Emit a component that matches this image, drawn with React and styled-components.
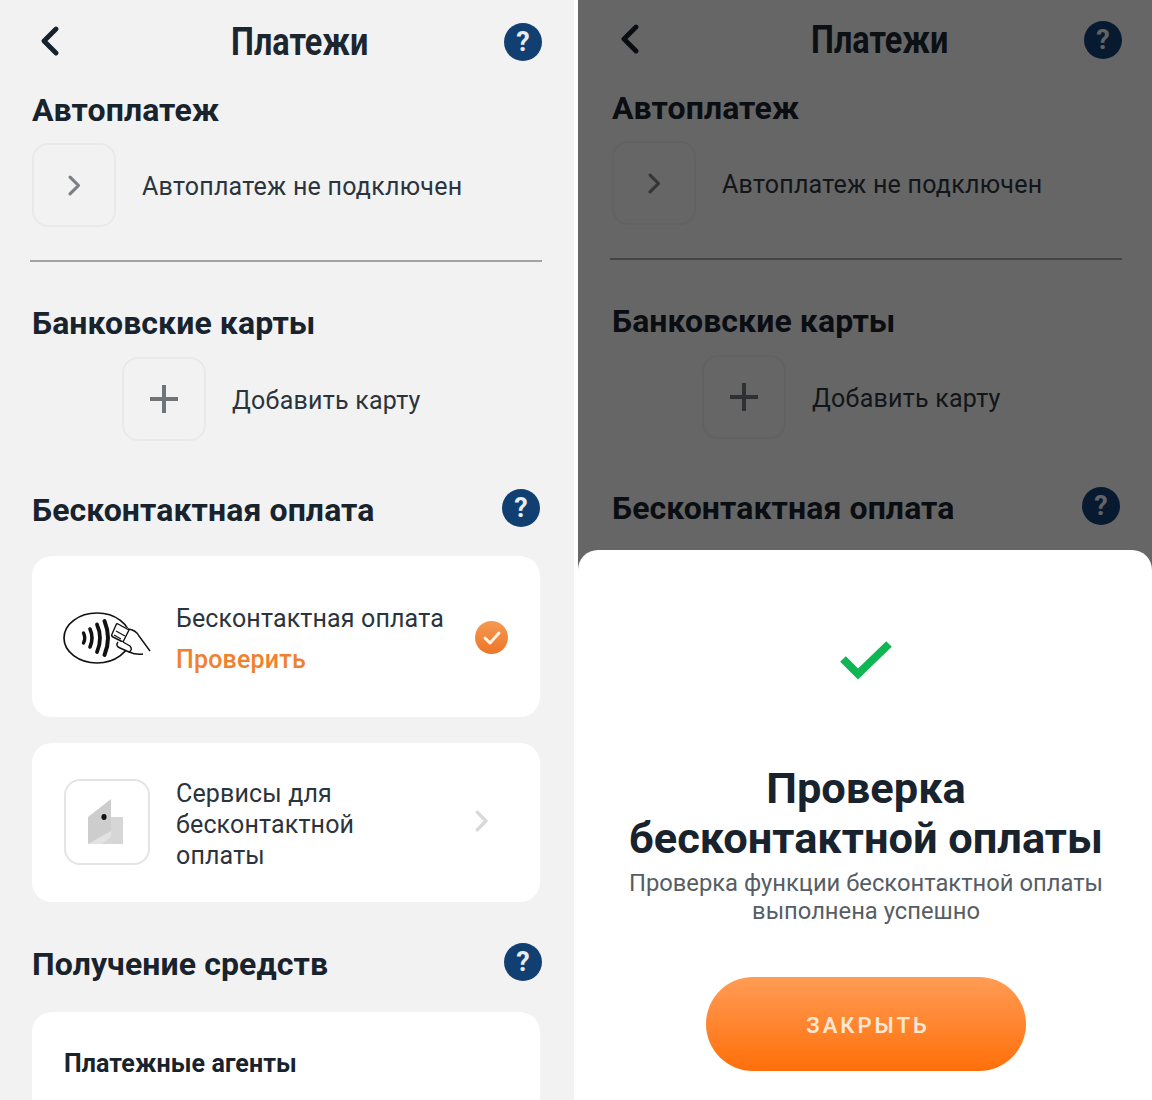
import React from "react"
import styled, { createGlobalStyle } from "styled-components"

const GlobalStyle = createGlobalStyle`
    html, body {
        margin: 0;
        padding: 0;
        background: #fff;
    }
    * {
        box-sizing: border-box;
    }
`

function Chevron({ size = 24, color = "#7c7f83", width = 3 }) {
    return (
        <svg width={size * 0.6} height={size} viewBox="0 0 12 20" fill="none">
            <path d="M2 2 L10 10 L2 18" stroke={color} strokeWidth={width} strokeLinecap="round" strokeLinejoin="round" />
        </svg>
    )
}

function BackArrow() {
    return (
        <svg width="20" height="30" viewBox="0 0 20 30" fill="none">
            <path d="M16 3 L4 15 L16 27" stroke="#16212c" strokeWidth="4.8" strokeLinecap="round" strokeLinejoin="round" />
        </svg>
    )
}

function ContactlessLogo() {
    return (
        <svg width="88" height="54" viewBox="0 0 88 54" fill="none" stroke="#111">
            <ellipse cx="34" cy="27" rx="33" ry="25" strokeWidth="1.7" />
            <path d="M20.5 22 Q23 27 20.5 32" strokeWidth="3.4" strokeLinecap="round" />
            <path d="M27 18 Q31 27 27 36" strokeWidth="3.6" strokeLinecap="round" />
            <path d="M34 13.5 Q40 27 34 41" strokeWidth="3.8" strokeLinecap="round" />
            <path d="M41.5 10 Q48.5 27 41.5 44" strokeWidth="4" strokeLinecap="round" />
            <g fill="#fff" strokeWidth="1.4" strokeLinejoin="round">
                <path d="M52 14 Q67 15 72 24 Q80 34 87 41 L80 42 Q73 44 66 40 L50 34 Z" stroke="none" />
                <path d="M55 13 L66 19 L60 31 L50 26 Q48 25 49 23 L53 14 Q54 12 55 13 Z" />
                <path d="M65 18 Q73 19 76 25 L87 40" fill="none" />
                <path d="M53 20 L62 25 M51 24 L58 28" fill="none" strokeWidth="1.1" />
                <path d="M60 31 L67 35 Q70 39 66 41 L57 37 Q52 35 55 31" />
                <path d="M66 41 Q73 44 80 43" fill="none" />
            </g>
        </svg>
    )
}

function CardGlyph() {
    return (
        <svg width="35" height="45" viewBox="0 0 35 45">
            <path d="M23 18 L35 18 L35 45 L0 45 Z" fill="#d6d6d6" />
            <path d="M0 18 L23 0 L23 32 L0 45 Z" fill="#cdcdcd" />
            <path d="M0 45 L23 32 L23 38 L14 45 Z" fill="#e2e2e2" />
            <ellipse cx="16" cy="18" rx="2.6" ry="3" fill="#111" />
        </svg>
    )
}

function SmallCheck() {
    return (
        <svg width="20" height="16" viewBox="0 0 20 16" fill="none">
            <path d="M3 8 L8 13 L17 3" stroke="#fff3e6" strokeWidth="3" strokeLinecap="round" strokeLinejoin="round" />
        </svg>
    )
}

function BigCheck() {
    return (
        <svg width="54" height="42" viewBox="0 0 54 42" fill="none">
            <path d="M4 20 L19 35 L50 5" stroke="#10b653" strokeWidth="8" strokeLinejoin="miter" />
        </svg>
    )
}

function ScreenContent({ dimmed }) {
    return (
        <Content $dimmed={dimmed}>
            <Header>
                <BackButton><BackArrow /></BackButton>
                <PageTitle>Платежи</PageTitle>
                <HelpBadge $top={0}>?</HelpBadge>
            </Header>

            <Heading $top={8}>Автоплатеж</Heading>
            <ActionRow $top={15}>
                <Tile><Chevron size={21} /></Tile>
                <ActionText>Автоплатеж не подключен</ActionText>
            </ActionRow>
            <Divider />

            <Heading $top={43}>Банковские карты</Heading>
            <ActionRow $top={16} $indent={90}>
                <Tile><PlusIcon /></Tile>
                <ActionText>Добавить карту</ActionText>
            </ActionRow>

            <HeadingRow $top={51}>
                <Heading>Бесконтактная оплата</Heading>
                <HelpBadge $shift={2}>?</HelpBadge>
            </HeadingRow>

            {!dimmed && (
                <>
                    <Card $top={28} $height={161}>
                        <LogoSlot><ContactlessLogo /></LogoSlot>
                        <CardBody>
                            <CardText>Бесконтактная оплата</CardText>
                            <CheckLink>Проверить</CheckLink>
                        </CardBody>
                        <StatusDot><SmallCheck /></StatusDot>
                    </Card>

                    <Card $top={26} $height={159}>
                        <GlyphTile><CardGlyph /></GlyphTile>
                        <CardBody>
                            <CardText>Сервисы для<br />бесконтактной<br />оплаты</CardText>
                        </CardBody>
                        <CardArrow><Chevron size={22} color="#d8d8d8" /></CardArrow>
                    </Card>

                    <HeadingRow $top={44}>
                        <Heading>Получение средств</Heading>
                        <HelpBadge>?</HelpBadge>
                    </HeadingRow>

                    <AgentsCard>
                        <AgentsTitle>Платежные агенты</AgentsTitle>
                    </AgentsCard>
                </>
            )}
        </Content>
    )
}

function App() {
    return (
        <>
            <GlobalStyle />
            <Page>
                <Screen>
                    <ScreenContent />
                </Screen>
                <Screen>
                    <ScreenContent dimmed />
                    <Overlay />
                    <Sheet>
                        <BigCheck />
                        <SheetTitle>Проверка<br />бесконтактной оплаты</SheetTitle>
                        <SheetText>Проверка функции бесконтактной оплаты<br />выполнена успешно</SheetText>
                        <CloseButton>ЗАКРЫТЬ</CloseButton>
                    </Sheet>
                </Screen>
            </Page>
        </>
    )
}

export default App;

const PlusIcon = styled.span`
    width: 28px;
    height: 28px;
    background:
        linear-gradient(#6f7479, #6f7479) center / 28px 4px no-repeat,
        linear-gradient(#6f7479, #6f7479) center / 4px 28px no-repeat;
`

const Page = styled.div`
    display: flex;
    gap: 4px;
    width: 1152px;
    height: 1100px;
    overflow: hidden;
    background: #fff;
    font-family: Roboto, "Liberation Sans", sans-serif;
`

const Screen = styled.div`
    position: relative;
    flex: 0 0 574px;
    height: 1100px;
    overflow: hidden;
    background: #f2f2f2;
`

const Content = styled.div`
    display: flex;
    flex-direction: column;
    width: 574px;
    padding: 0 32px;
    margin-top: ${p => (p.$dimmed ? "-2px" : "0")};
    margin-left: ${p => (p.$dimmed ? "2px" : "0")};
    color: #16212c;
`

const Header = styled.div`
    display: flex;
    align-items: center;
    justify-content: space-between;
    height: 84px;
`

const BackButton = styled.div`
    display: flex;
    width: 38px;
    padding-left: 8px;
    margin-top: -2px;
`

const PageTitle = styled.h1`
    margin: 0 0 0 25px;
    font-size: 39px;
    font-weight: 700;
    line-height: 42px;
    color: #1b2630;
    transform: scaleX(0.83);
`

const HelpBadge = styled.div`
    display: flex;
    align-items: center;
    justify-content: center;
    width: 38px;
    height: 38px;
    margin-right: ${p => p.$shift || 0}px;
    margin-top: ${p => p.$top ?? -4}px;
    border-radius: 50%;
    background: #123f72;
    color: #e9edf2;
    font-size: 27px;
    font-weight: 700;
`

const Heading = styled.h2`
    margin: ${p => p.$top || 0}px 0 0;
    font-size: 32px;
    font-weight: 700;
    line-height: 36px;
    letter-spacing: 0.1px;
    color: #18232e;
`

const HeadingRow = styled.div`
    display: flex;
    align-items: center;
    justify-content: space-between;
    margin-top: ${p => p.$top}px;
`

const ActionRow = styled.div`
    display: flex;
    align-items: center;
    gap: 26px;
    margin-top: ${p => p.$top}px;
    margin-left: ${p => p.$indent || 0}px;
`

const Tile = styled.div`
    display: flex;
    align-items: center;
    justify-content: center;
    width: 84px;
    height: 84px;
    border: 2px solid #e9e9e9;
    border-radius: 16px;
`

const ActionText = styled.span`
    margin-top: 2px;
    font-size: 25px;
    letter-spacing: 0.25px;
    color: #2b343d;
`

const Divider = styled.hr`
    width: 512px;
    height: 2px;
    margin: 33px 0 0 -2px;
    border: 0;
    background: #a3a3a3;
`

const Card = styled.div`
    display: flex;
    align-items: center;
    width: 508px;
    height: ${p => p.$height}px;
    margin-top: ${p => p.$top}px;
    padding: 0 32px;
    border-radius: 20px;
    background: #fff;
`

const LogoSlot = styled.div`
    display: flex;
    flex: 0 0 113px;
    margin: 2px 0 0 -1px;
`

const GlyphTile = styled.div`
    display: flex;
    align-items: center;
    justify-content: center;
    flex: 0 0 86px;
    height: 86px;
    margin-right: 26px;
    margin-top: -2px;
    padding-right: 3px;
    border: 2px solid #e4e4e4;
    border-radius: 16px;
`

const CardBody = styled.div`
    flex: 1;
    margin-top: 4px;
`

const CardText = styled.div`
    font-size: 25px;
    line-height: 31px;
    letter-spacing: 0.15px;
    color: #2b343d;
`

const CheckLink = styled.div`
    margin-top: 10px;
    font-size: 25px;
    line-height: 31px;
    font-weight: 500;
    letter-spacing: 0.2px;
    color: #f0812e;
`

const StatusDot = styled.div`
    display: flex;
    align-items: center;
    justify-content: center;
    flex: 0 0 33px;
    height: 33px;
    margin-top: 2px;
    border-radius: 50%;
    background: linear-gradient(#f59a52, #ee7426);
`

const CardArrow = styled.div`
    display: flex;
    margin-right: 20px;
    margin-top: -4px;
`

const AgentsCard = styled.div`
    width: 508px;
    height: 200px;
    margin-top: 30px;
    padding: 36px 32px 0;
    border-radius: 20px;
    background: #fff;
`

const AgentsTitle = styled.h3`
    margin: 0;
    font-size: 25px;
    line-height: 32px;
    font-weight: 700;
    letter-spacing: 0.1px;
    color: #18232e;
`

const Overlay = styled.div`
    position: absolute;
    inset: 0;
    background: rgba(0, 0, 0, 0.58);
`

const Sheet = styled.div`
    position: absolute;
    left: 0;
    right: 0;
    bottom: 0;
    height: 550px;
    display: flex;
    flex-direction: column;
    align-items: center;
    padding: 89px 0 0 2px;
    border-radius: 20px 20px 0 0;
    background: #fff;
`

const SheetTitle = styled.h2`
    margin: 83px 0 0;
    font-size: 43.4px;
    line-height: 50px;
    font-weight: 700;
    text-align: center;
    color: #18232e;
`

const SheetText = styled.p`
    margin: 5px 0 0;
    font-size: 23.75px;
    line-height: 28px;
    text-align: center;
    color: #565d64;
`

const CloseButton = styled.button`
    width: 320px;
    height: 94px;
    margin-top: 52px;
    padding: 2px 0 0 4px;
    border: 0;
    border-radius: 47px;
    background: linear-gradient(#ff9c55, #ff6f0a);
    color: #fde6d2;
    font-family: Roboto, sans-serif;
    font-size: 22px;
    font-weight: 600;
    letter-spacing: 3px;
`
